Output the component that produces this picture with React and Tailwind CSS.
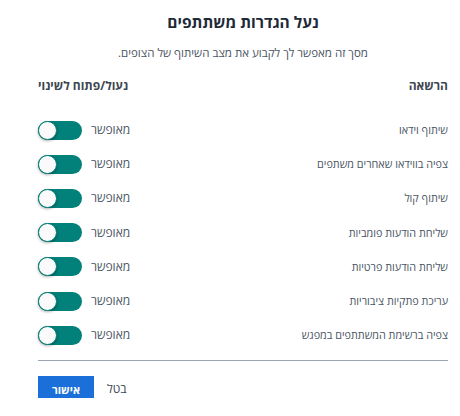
import React from "react";

const rows = [
  "שיתוף וידאו",
  "צפיה בווידאו שאחרים משתפים",
  "שיתוף קול",
  "שליחת הודעות פומביות",
  "שליחת הודעות פרטיות",
  "עריכת פתקיות ציבוריות",
  "צפיה ברשימת המשתתפים במפגש",
];

function Toggle() {
  return (
    <div className="relative w-[44px] h-[19px] rounded-full bg-[#02807a]">
      <div className="absolute left-0 top-0 w-[19px] h-[19px] rounded-full bg-[#fafafa] border-[1.5px] border-[#02807a] shadow-[0_1px_3px_rgba(0,0,0,0.35)]" />
    </div>
  );
}

export default function App() {
  return (
    <div
      dir="rtl"
      className="w-[460px] h-[416px] bg-white overflow-hidden pr-[12px] pl-[38px] flex flex-col"
      style={{ fontFamily: '"Open Sans", "Liberation Sans", sans-serif' }}
    >
      <div className="mt-[10px] h-[24px] leading-[24px] text-center text-[15.5px] font-bold text-[#1e2a38]">
        נעל הגדרות משתתפים
      </div>
      <div className="mt-[10px] h-[18px] leading-[18px] text-center text-[11.5px] text-[#4a5563]">
        מסך זה מאפשר לך לקבוע את מצב השיתוף של הצופים.
      </div>
      <div className="mt-[15px] h-[18px] leading-[18px] flex justify-between text-[12px] font-bold text-[#3d4651]">
        <span>הרשאה</span>
        <span>נעול/פתוח לשינוי</span>
      </div>
      <div className="mt-[18px] flex flex-col">
        {rows.map((r) => (
          <div key={r} className="h-[34.2px] flex items-center justify-between">
            <span className="text-[10.8px] text-[#4a5563]">{r}</span>
            <div className="flex items-center gap-[9px]">
              <span className="text-[12px] text-[#4a5563]">מאופשר</span>
              <Toggle />
            </div>
          </div>
        ))}
      </div>
      <div className="mt-[8px] h-px bg-[#9aa5b1]" />
      <div className="mt-[15px] flex items-center justify-end gap-[13px]">
        <span className="text-[12px] text-[#3d4651] pt-[4px]">בטל</span>
        <button className="w-[56px] h-[22px] bg-[#1a6fd8] text-white text-[11px] font-bold pt-[5px] leading-[16px]">
          אישור
        </button>
      </div>
    </div>
  );
}
